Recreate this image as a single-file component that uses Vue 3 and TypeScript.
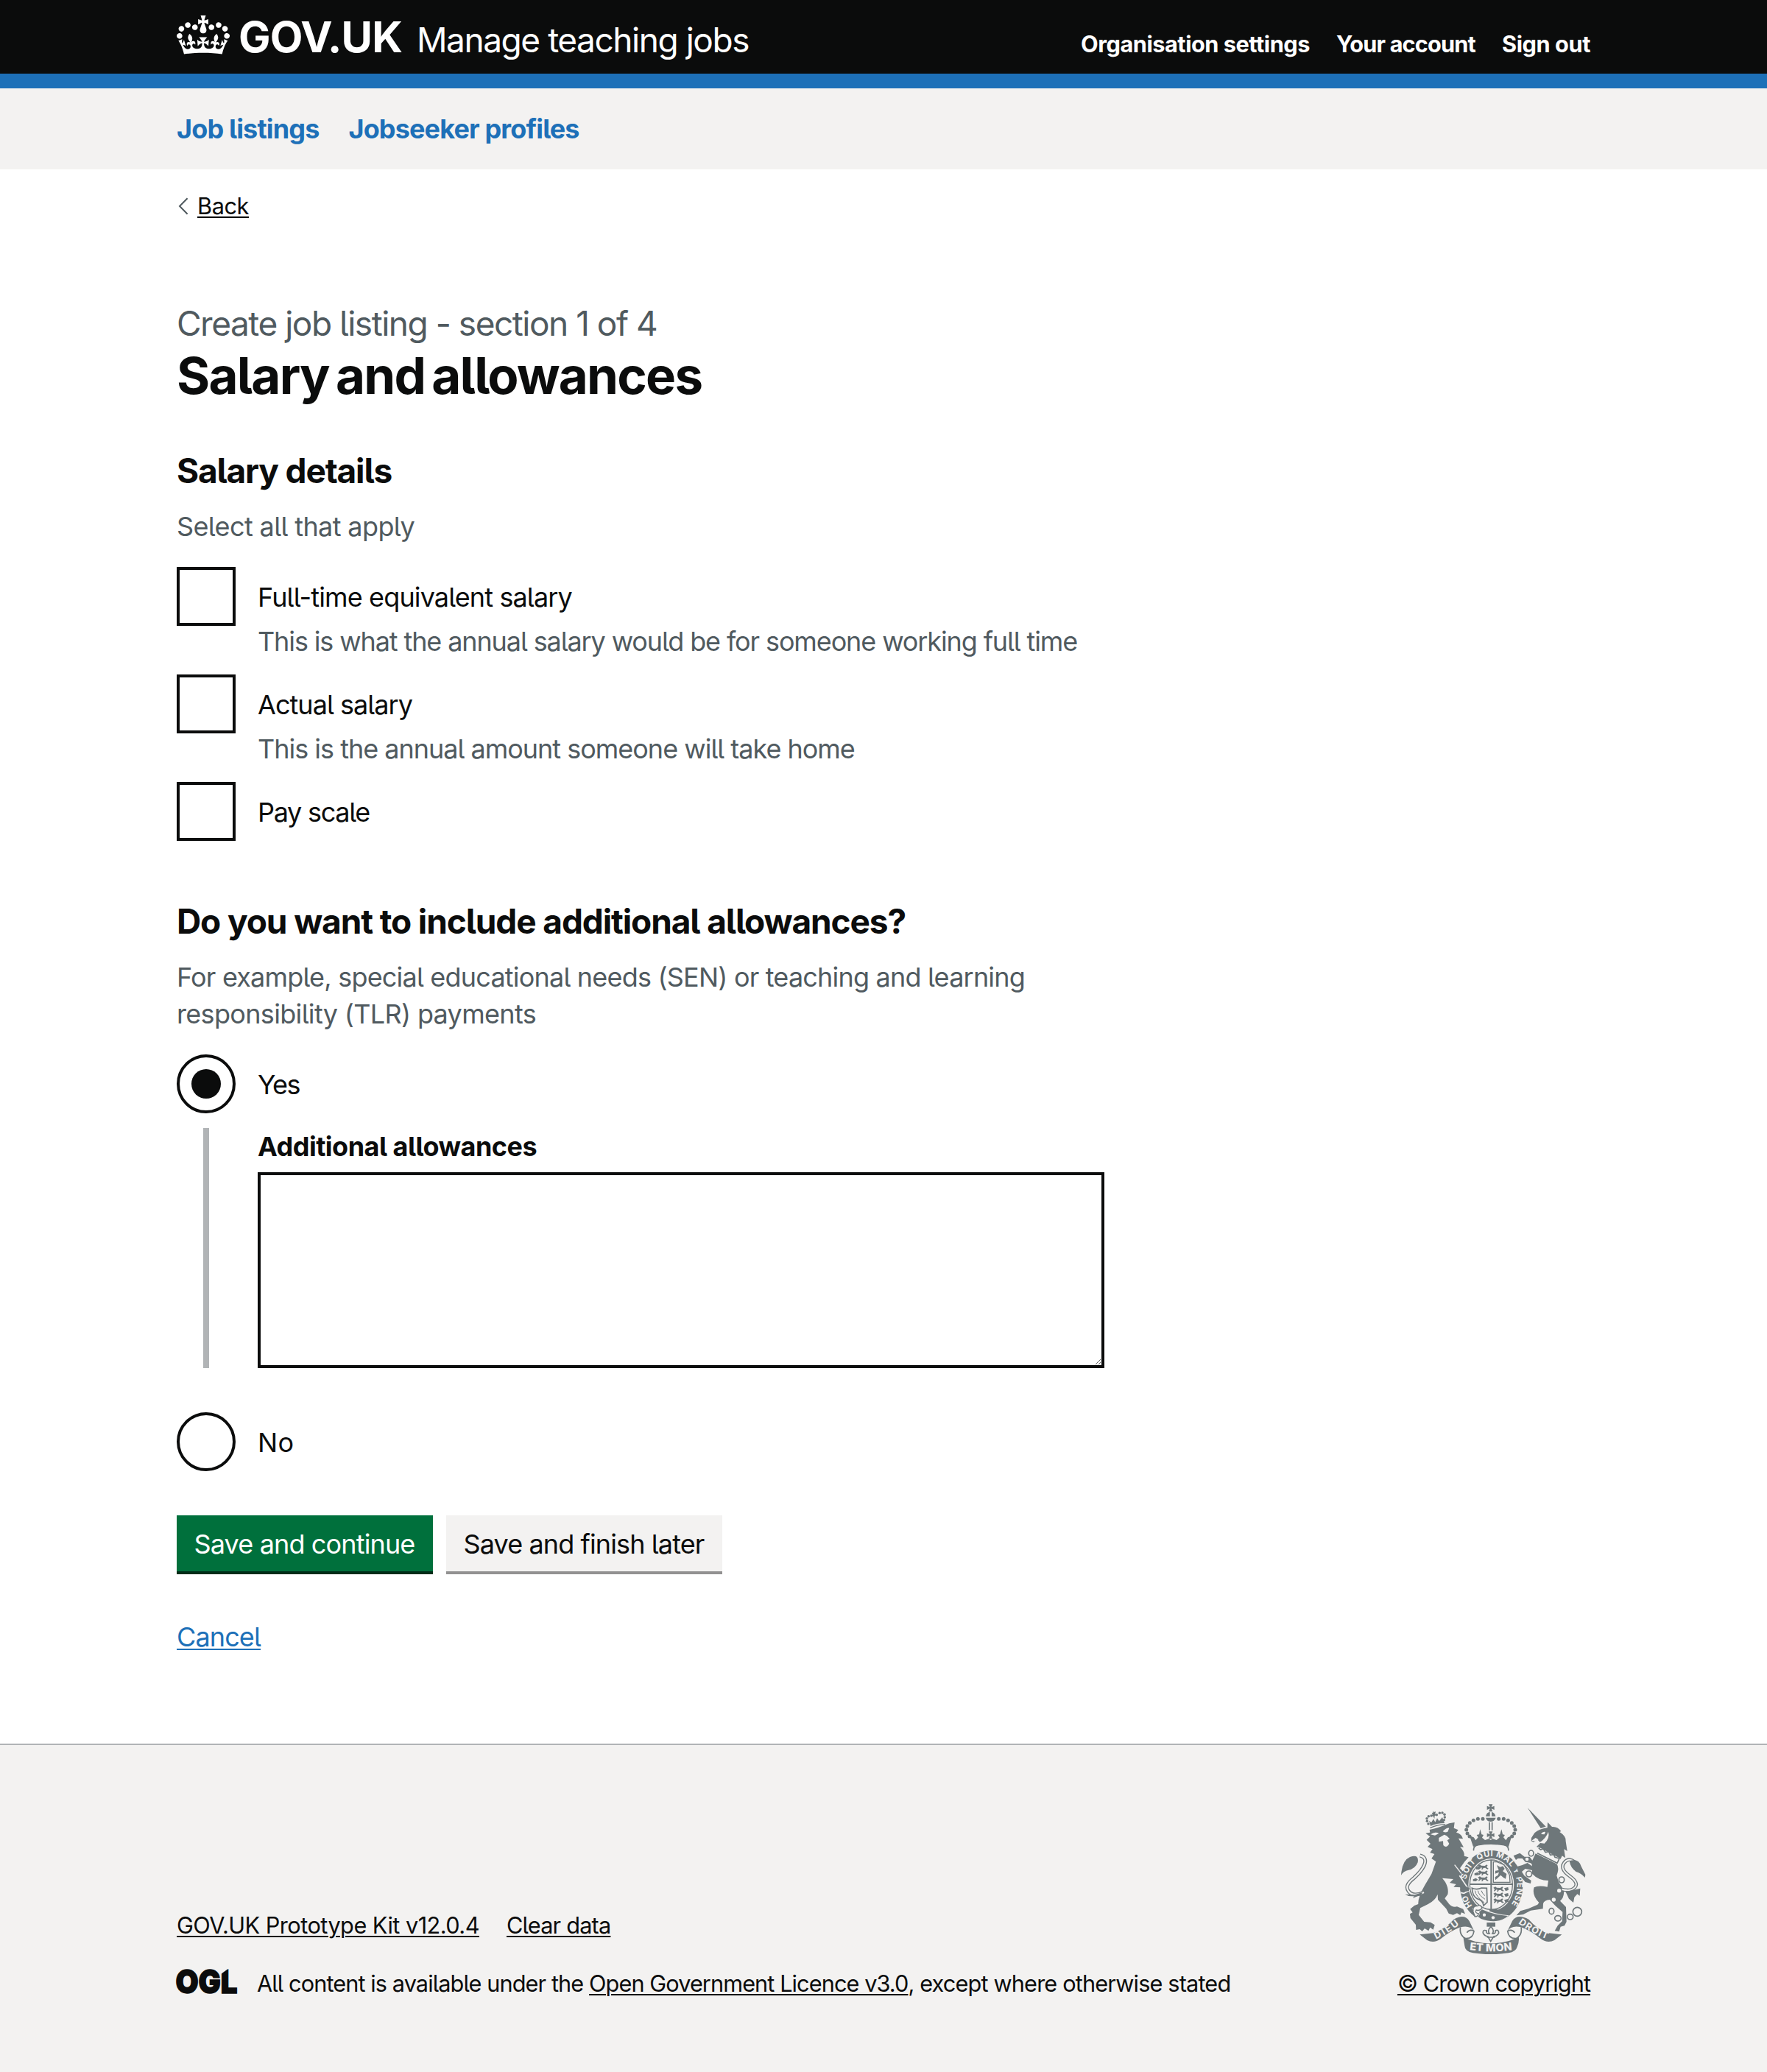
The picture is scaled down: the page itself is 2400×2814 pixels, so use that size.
<script setup lang="ts">
import { ref } from 'vue'

interface SalaryOption {
  id: string
  label: string
  hint?: string
}

const accountLinks = [
  { id: 'organisation', text: 'Organisation settings' },
  { id: 'account', text: 'Your account' },
  { id: 'signout', text: 'Sign out' },
]

const salaryOptions: SalaryOption[] = [
  {
    id: 'full-time',
    label: 'Full-time equivalent salary',
    hint: 'This is what the annual salary would be for someone working full time',
  },
  { id: 'actual', label: 'Actual salary', hint: 'This is the annual amount someone will take home' },
  { id: 'scale', label: 'Pay scale' },
]

const selected = ref<string[]>([])
const allowances = ref<'yes' | 'no'>('yes')
const allowanceText = ref('')

// Beads on the left arch of the royal crown; the right arch mirrors them.
const beads = [
  [405, 121], [385, 121], [367, 127], [352, 137], [342, 150], [338, 165], [342, 180], [351, 192],
]
// Beads of the small crown on the lion's head.
const lionBeads = [
  [183, 141], [178, 130], [177, 119], [184, 110], [195, 108], [217, 104], [229, 97], [240, 96], [249, 103], [250, 114], [247, 125],
]
// Rings of the chain worn by the unicorn.
const chain = [
  [602, 261, 10, 12], [593, 345, 12, 12], [726, 369, 11, 12], [685, 497, 10, 12], [711, 526, 13, 11], [761, 520, 12, 11], [790, 499, 18, 18],
]
const lionRows = [0, 24, 48]
</script>

<template>
  <div class="page">
    <header class="header">
      <div class="container header-row">
        <svg class="crown" viewBox="0 0 132 97" aria-hidden="true">
          <path fill="currentColor" fill-rule="evenodd" d="M25 30.2c3.5 1.5 7.7-.2 9.1-3.7 1.5-3.6-.2-7.8-3.9-9.2-3.6-1.4-7.6.3-9.1 3.9-1.4 3.5.3 7.5 3.9 9zM9 39.5c3.6 1.5 7.8-.2 9.2-3.7 1.5-3.6-.2-7.8-3.9-9.1-3.6-1.5-7.6.2-9.1 3.8-1.4 3.5.3 7.5 3.8 9zM4.4 57.2c3.5 1.5 7.7-.2 9.1-3.8 1.5-3.6-.2-7.7-3.9-9.1-3.5-1.5-7.6.3-9.1 3.8-1.4 3.5.3 7.6 3.9 9.1zm38.3-21.4c3.5 1.5 7.7-.2 9.1-3.8 1.5-3.6-.2-7.7-3.9-9.1-3.6-1.5-7.6.3-9.1 3.8-1.3 3.6.4 7.7 3.9 9.1zm64.4-5.6c-3.6 1.5-7.8-.2-9.1-3.7-1.5-3.6.2-7.8 3.8-9.2 3.6-1.4 7.7.3 9.2 3.9 1.3 3.5-.4 7.5-3.9 9zm15.9 9.3c-3.6 1.5-7.7-.2-9.1-3.7-1.5-3.6.2-7.8 3.7-9.1 3.6-1.5 7.7.2 9.2 3.8 1.5 3.5-.3 7.5-3.8 9zm4.7 17.7c-3.6 1.5-7.8-.2-9.2-3.8-1.5-3.6.2-7.7 3.9-9.1 3.6-1.5 7.7.3 9.2 3.8 1.3 3.5-.4 7.6-3.9 9.1zM89.3 35.8c-3.6 1.5-7.8-.2-9.2-3.8-1.4-3.6.2-7.7 3.9-9.1 3.6-1.5 7.7.3 9.2 3.8 1.4 3.6-.3 7.7-3.9 9.1zM69.7 17.7l8.9 4.7V9.3l-8.9 2.8c-.2-.3-.5-.6-.9-.9L72.4 0H59.6l3.5 11.2c-.3.3-.6.5-.9.9l-8.8-2.8v13.1l8.8-4.7c.3.3.6.7.9.9l-5 15.4v.1c-.2.8-.4 1.6-.4 2.4 0 4.1 3.1 7.5 7 8.1h.2c.3 0 .7.1 1 .1.4 0 .7 0 1-.1h.2c4-.6 7.1-4.1 7.1-8.1 0-.8-.1-1.7-.4-2.4V34l-5.1-15.4c.4-.2.7-.6 1-.9zM66 92.8c16.9 0 32.8 1.1 47.1 3.2 4-16.9 8.9-26.7 14-33.5l-9.6-3.4c1 4.9 1.1 7.2 0 10.2-1.5-1.4-3-4.3-4.2-8.7L108.6 76c2.8-2 5-3.2 7.5-3.3-4.4 9.4-10 11.9-13.6 11.2-4.3-.8-6.3-4.6-5.6-7.9 1-4.7 5.7-5.9 8-.5 4.3-8.7-3-11.4-7.6-8.8 7.1-7.2 7.9-13.5 2.1-21.1-8 6.1-8.1 12.3-4.5 20.8-4.7-5.4-12.1-2.5-9.5 6.2 3.4-5.2 7.9-2 7.2 3.1-.6 4.3-6.4 7.8-13.5 7.2-10.3-.9-10.9-8-11.2-13.8 2.5-.5 7.1 1.8 11 7.3L80.2 60c-4.1 4.4-8 5.3-12.3 5.4 1.4-4.4 8-11.6 8-11.6H55.5s6.4 7.2 7.9 11.6c-4.2-.1-8-1-12.3-5.4l1.4 16.4c3.9-5.5 8.5-7.7 10.9-7.3-.3 5.8-.9 12.8-11.1 13.8-7.2.6-12.9-2.9-13.5-7.2-.7-5 3.8-8.3 7.1-3.1 2.7-8.7-4.6-11.6-9.4-6.2 3.7-8.5 3.6-14.7-4.6-20.8-5.8 7.6-5 13.9 2.2 21.1-4.7-2.6-11.9.1-7.7 8.8 2.3-5.5 7.1-4.2 8.1.5.7 3.3-1.3 7.1-5.7 7.9-3.5.7-9-1.8-13.5-11.2 2.5.1 4.7 1.3 7.5 3.3l-4.7-15.4c-1.2 4.4-2.7 7.2-4.3 8.7-1.1-3-.9-5.3 0-10.2l-9.5 3.4c5 6.9 9.9 16.7 14 33.5 14.8-2.1 30.8-3.2 47.7-3.2z" />
        </svg>
        <span class="logotype">GOV.UK</span>
        <span class="product">Manage teaching jobs</span>
        <nav class="account-nav">
          <a v-for="link in accountLinks" :key="link.id" :class="link.id">{{ link.text }}</a>
        </nav>
      </div>
    </header>

    <nav class="primary-nav">
      <div class="container primary-row">
        <a>Job listings</a>
        <a>Jobseeker profiles</a>
      </div>
    </nav>

    <div class="container back-row">
      <svg class="chevron" viewBox="0 0 14 24" aria-hidden="true">
        <path d="M12.6 1.2 2 12l10.6 10.8" fill="none" stroke="#505a5f" stroke-width="2" />
      </svg>
      <a class="link back">Back</a>
    </div>

    <main class="container main">
      <div class="caption">Create job listing - section 1 of 4</div>
      <h1>Salary and allowances</h1>

      <form @submit.prevent>
        <section>
          <h2 class="details">Salary details</h2>
          <p class="hint select-hint">Select all that apply</p>
          <div class="options">
            <label v-for="option in salaryOptions" :key="option.id" class="option" :class="option.id">
              <input v-model="selected" class="box" type="checkbox" :value="option.id" />
              <span class="option-text">
                <span class="label">{{ option.label }}</span>
                <span v-if="option.hint" class="hint item-hint">{{ option.hint }}</span>
              </span>
            </label>
          </div>
        </section>

        <section class="allowances">
          <h2 class="question">Do you want to include additional allowances?</h2>
          <p class="hint example">
            <span>For example, special educational needs (SEN) or teaching and learning</span><br />
            <span class="second">responsibility (TLR) payments</span>
          </p>
          <label class="option yes">
            <input v-model="allowances" class="box round" type="radio" value="yes" />
            <span class="option-text"><span class="label">Yes</span></span>
          </label>
          <div class="conditional">
            <label class="field-label" for="allowance-text">Additional allowances</label>
            <textarea id="allowance-text" v-model="allowanceText"></textarea>
          </div>
          <label class="option no">
            <input v-model="allowances" class="box round" type="radio" value="no" />
            <span class="option-text"><span class="label">No</span></span>
          </label>
        </section>

        <div class="buttons">
          <button class="primary">Save and continue</button>
          <button class="secondary">Save and finish later</button>
        </div>
        <a class="link cancel">Cancel</a>
      </form>
    </main>

    <footer class="footer">
      <div class="container footer-row">
        <div class="footer-meta">
          <div class="footer-links">
            <a class="link kit">GOV.UK Prototype Kit v12.0.4</a>
            <a class="link clear">Clear data</a>
          </div>
          <div class="licence">
            <svg class="ogl" viewBox="0 0 82 40" aria-label="OGL">
              <text x="-1.5" y="33" textLength="84" lengthAdjust="spacingAndGlyphs">OGL</text>
              <path class="bg" d="M60 -1H71L60 7Z" />
            </svg>
            <div class="licence-text"><span class="l1">All content is available under the </span><a class="link l2">Open Government Licence v3.0</a><span class="l3">, except where otherwise stated</span></div>
          </div>
        </div>
        <div class="copyright">
          <svg class="arms" viewBox="57 60 783 612" aria-hidden="true">
            <defs>
              <path id="garter" d="M362 474 A105 120 0 1 1 502 490" />
              <path id="dieu" d="M215 611 Q262 590 318 545" />
              <path id="droit" d="M549 546 Q600 585 672 613" />
              <path id="etmon" d="M351 655 Q438 666 526 655" />
              <g id="cross">
                <path d="M-8 -15H8L3 -3 15 -8V8L3 3 8 15H-8L-3 3-15 8V-8L-3 -3Z" />
              </g>
              <g id="passant">
                <path d="M0 4l8-4 6 4 14 1 8-5 4 4-4 3 1 5 6 4-3 3-7-3-2-3-9 1-2 5-6 1 3-7-5-1-4 5-6 2 1-5 3-3-3-3z" />
              </g>
            </defs>
            <g class="grey">
              <!-- lion -->
              <circle v-for="(bead, i) in lionBeads" :key="i" :cx="bead[0]" :cy="bead[1]" r="5.2" />
              <path d="M192 150 186 128 195 136 204 121 211 134 219 118 227 130 240 114 249 138Q217 138 192 150ZM202 88l4 5 7-2-2 9 4 6-6 2-1 12-5-10-6-1 3-7-3-6 6-1z" />
              <path d="M190 158Q218 144 252 143" fill="none" class="outline" stroke-width="4" />
              <path d="M172 179 190 176 188 165Q225 158 268 139L290 135 287 158 305 166 297 176Q320 182 324 202L306 200 327 236 312 235Q332 255 329 272L347 277 330 296 312 322 331 342 350 376 350 412 338 405 330 418 312 412 318 400 286 398 296 387 270 381 285 366 240 362 252 378Q267 405 262 428L250 445 268 468Q280 482 300 478L325 488 333 508 318 502 313 513 300 505 284 512 266 506 256 487 222 450 221 428Q212 452 182 468L150 484 144 512 166 540 192 542 209 553 203 572 190 563 184 577 168 567 158 579 148 570 133 573 132 552 110 525 108 508 119 502 109 488 126 474 142 468Q140 440 168 392L196 345 214 295 196 282 208 264 190 258 200 244 180 235 192 222 176 206 190 193Z" />
              <path d="M165 420Q122 440 103 416T124 362Q163 326 169 301T149 270" fill="none" class="outline" stroke-width="15" />
            </g>
            <path d="M165 420Q122 440 103 416T124 362Q163 326 169 301T149 270" class="cut" stroke-width="7" />
            <path class="grey" d="M72 350Q76 290 108 276 146 262 140 298 130 325 100 330 82 334 72 350ZM88 428Q108 428 128 430L158 420 158 427 120 444 126 435Q105 439 88 428Z" />
            <path d="M192 184Q210 171 226 180L210 188ZM242 172Q256 156 268 158L262 173Q250 178 242 172ZM226 198 248 185 258 190 270 202 260 208 268 222Q257 242 244 228L243 211 226 214Z" class="bg" />
            <path d="M290 308 318 344" class="cut" stroke-width="4" />

            <g class="grey">
              <!-- royal crown -->
              <use href="#cross" x="437" y="76" />
              <path d="M417 110Q420 94 434 92V110ZM441 92Q455 96 457 110H441ZM417 116H458Q452 132 437 132T417 116Z" />
              <path d="M432 134V167M443 134V167" class="outline" stroke-width="5" />
              <g v-for="(bead, i) in beads" :key="i">
                <circle :cx="bead[0]" :cy="bead[1]" r="7.5" />
                <circle :cx="875 - bead[0]" :cy="bead[1]" r="7.5" />
              </g>
              <use href="#cross" x="437" y="187" />
              <path d="M351 190 368 196 376 208 386 196 380 186 390 184 394 163 400 184 408 186 402 197 414 207 430 202 437 207 445 202 461 207 473 197 467 186 475 184 481 163 486 184 495 186 489 196 499 208 507 196 523 190 510 234Q438 210 366 234Z" />
              <path d="M368 250Q365 232 385 227 438 218 492 227 512 232 509 250" fill="none" class="outline" stroke-width="5" />
              <!-- garter -->
              <ellipse cx="440" cy="395" rx="128" ry="146" />
            </g>
            <path d="M371 252Q370 237 390 233 438 225 487 233 506 238 507 251L490 257Q440 234 386 257Z" class="bg" />
            <ellipse cx="439" cy="389" rx="93" ry="107" class="bg" />
            <text class="motto"><textPath href="#garter" textLength="48">HO</textPath><textPath href="#garter" startOffset="112" textLength="408">SOIT QUI MAL Y PENSE</textPath></text>
            <g class="grey">
              <ellipse cx="439" cy="389" rx="87" ry="101" fill="none" class="outline" stroke-width="4" />
              <path d="M439 288V490M352 387H526" class="outline" stroke-width="6" />
              <g v-for="dy in lionRows" :key="dy">
                <use href="#passant" :x="385" :y="307 + dy" />
                <use href="#passant" :x="448" :y="397 + dy" />
                <path :d="`M${365 + (48 - dy) / 4} ${319 + dy}l12-5 8 6-8 7-12-1zM${492} ${403 + dy}l16-4 2 11-12 5z`" />
              </g>
              <path d="M448 296H463L492 308 514 350 516 379H448Z" fill="none" class="outline" stroke-width="4" />
              <path d="M462 309 476 317 487 313 494 324 486 334 502 345 498 365 488 359 478 350 468 359 456 370 455 358 467 350 471 338 455 344 456 332 470 330Z" />
              <path d="M361 403Q382 411 400 402L421 403 423 460 408 474Q406 452 382 446 362 435 361 403Z" fill="none" class="outline" stroke-width="5" />
              <path d="M373 413Q376 436 411 462M385 413Q388 432 414 448M399 413Q403 426 414 434" fill="none" class="outline" stroke-width="3" />
              <path d="M429 488H466L458 500H436Z" />
            </g>
            <path d="M310 352 350 412 328 424 314 421" class="cut" stroke-width="5" />
            <path d="M362 485 387 470 405 484Q445 508 512 514L485 536Q420 556 378 524Z" class="bg" />
            <g class="grey">
              <path d="M402 490Q446 512 507 516 468 552 398 528L385 519Q396 510 390 500Z" />
              <path d="M366 497Q362 475 382 476 394 466 402 484 392 497 378 492 371 504 388 507 384 522 370 518 371 508Z" fill="none" class="outline" stroke-width="4" />
              <path d="M330 418 314 410 322 402 330 406 335 396 350 402 348 414Z" />
            </g>
            <circle cx="411" cy="512" r="6.5" class="bg" />
            <circle cx="447" cy="523" r="6.5" class="bg" />

            <g class="grey">
              <!-- unicorn -->
              <path d="M587 75 662 152 641 159Z" />
              <path d="M669 134 687 153Q710 151 724 171L718 174Q746 192 743 212L749 252 736 244 741 280 728 271 722 284 624 234 640 218 627 204 612 216 602 211 603 198 616 178Q634 162 668 157Z" />
              <path d="M620 262 706 304Q718 320 706 352L714 378 735 410Q738 440 720 455L744 480 746 540 738 556 722 560 716 580 698 577 710 556 728 538 730 500 700 474 678 450Q654 452 651 466L650 487 600 494 570 510 542 514 558 496 590 487 628 470 634 462Q604 430 614 400 632 390 668 398L672 372Q632 372 606 344L605 305 590 293 600 284 606 292Z" />
              <path d="M530 271 556 260 575 275 596 275 608 292 600 300 578 296 566 282 548 282 540 288ZM542 316 566 309 587 300 612 318 606 330 578 324 564 336 574 352 602 372 600 384 578 378 561 358 548 332Z" />
              <path d="M728 408Q762 418 780 400T758 353 736 300 779 296" fill="none" class="outline" stroke-width="14" />
            </g>
            <path d="M728 408Q762 418 780 400T758 353 736 300 779 296" class="cut" stroke-width="6" />
            <path class="grey" d="M758 292Q795 280 806 314L823 348 821 360Q806 342 785 336 762 320 758 292ZM742 416Q776 412 802 404L800 434 790 427 778 440 774 462 756 446Z" />
            <path d="M642 183Q650 170 660 174L656 184ZM604 209 620 198 632 205 615 212ZM634 218Q662 202 672 173 679 199 656 221Z" class="bg" />
            <path d="M630 234 720 282 708 305 624 262Z" class="bg" />
            <path d="M632 238 640 246 652 243 660 257 674 254 680 268 694 266 699 277 717 282 708 301 627 260" fill="none" class="grey outline" stroke-width="5" />
            <g>
              <ellipse v-for="(ring, i) in chain" :key="i" :cx="ring[0]" :cy="ring[1]" :rx="ring[2]" :ry="ring[3]" class="ring" />
              <circle cx="716" cy="413" r="8" class="bg" />
              <circle cx="694" cy="450" r="8" class="bg" />
              <circle cx="585" cy="285" r="7" class="bg" />
            </g>

            <g class="grey">
              <!-- ribbon -->
              <path d="M148 592 202 586Q248 572 287 530 330 505 350 537L370 578Q352 552 314 562 272 578 234 609 206 630 178 615Z" />
              <path d="M727 592 673 586Q627 572 592 530 545 505 525 537L505 578Q523 552 561 562 603 578 641 609 669 630 697 615Z" />
              <path d="M325 601Q370 628 438 628T551 601Q555 618 545 642 540 662 510 667 438 678 365 667 332 660 331 638Z" />
              <path d="M314 562Q308 594 334 608 365 610 369 578 352 568 340 584M561 562Q567 594 541 608 510 610 506 578 523 568 535 584" fill="none" class="outline" stroke-width="5" />
              <path d="M421 543H456V560H421Z" />
              <path d="M438 560Q422 574 432 588 418 590 420 576 404 570 406 586 412 598 426 600 L437 620 449 600Q466 598 470 586 470 570 456 576 458 590 444 588 454 574 438 560ZM422 603H454" fill="none" class="outline" stroke-width="5" />
            </g>
            <g class="scroll">
              <text><textPath href="#dieu" textLength="112">DIEU</textPath></text>
              <text><textPath href="#droit" textLength="134">DROIT</textPath></text>
              <text class="large"><textPath href="#etmon" textLength="174">ET MON</textPath></text>
            </g>
          </svg>
          <a class="link crown-link">© Crown copyright</a>
        </div>
      </div>
    </footer>
  </div>
</template>

<style>
body {
  background: #f3f2f1;
}
</style>

<style scoped>
.page {
  background: #fff;
  color: #0b0c0c;
  font-family: Inter, "Liberation Sans", sans-serif;
  font-feature-settings: "cv05";
  font-size: 36px;
  line-height: 50px;
}
.container {
  width: 1920px;
  margin: 0 auto;
}
h1, h2, p { margin: 0; }

.header {
  height: 100px;
  background: #0b0c0c;
  border-bottom: 20px solid #1d70b8;
  color: #fff;
}
.header-row {
  display: flex;
  align-items: baseline;
  padding-top: 20px;
  white-space: nowrap;
}
.crown {
  align-self: flex-start;
  width: 72px;
  height: 53px;
  margin-top: 1px;
}
.logotype {
  margin-left: 12px;
  font-size: 58px;
  font-weight: 700;
  line-height: 60px;
  letter-spacing: -0.86px;
}
.product {
  margin-left: 20px;
  font-size: 46px;
  letter-spacing: -1.46px;
}
.account-nav {
  display: flex;
  gap: 36px;
  margin-left: auto;
  font-size: 30.7px;
  font-weight: 700;
  line-height: 40px;
}
.organisation { letter-spacing: -0.46px; }
.account { letter-spacing: -0.83px; }
.signout { letter-spacing: -0.42px; }

.primary-nav {
  background: #f3f2f1;
  color: #1d70b8;
  font-weight: 700;
}
.primary-row {
  display: flex;
  align-items: center;
  gap: 40px;
  height: 110px;
  letter-spacing: -0.85px;
}

.back-row {
  display: flex;
  align-items: center;
  gap: 12px;
  padding-top: 30px;
  line-height: 40px;
}
.chevron {
  width: 14px;
  height: 24px;
  margin-left: 2px;
}
.link {
  text-decoration: underline;
  text-decoration-thickness: 2px;
  text-underline-offset: 3px;
  white-space: nowrap;
}
.back { font-size: 30.7px; letter-spacing: -0.42px; }

.main { padding: 109px 0 120px; }
.caption {
  color: #505a5f;
  font-size: 46px;
  line-height: 60px;
  letter-spacing: -1.49px;
}
h1 {
  margin-top: 1px;
  font-size: 69px;
  line-height: 80px;
  letter-spacing: -1.75px;
  word-spacing: -5.5px;
}
h2 {
  font-size: 46px;
  line-height: 60px;
}
.details { margin-top: 59px; letter-spacing: -1.17px; }
.hint { color: #505a5f; }
.select-hint { margin: 21px 0 30px; letter-spacing: -0.62px; }
.options {
  display: flex;
  flex-direction: column;
  gap: 20px;
}
.option {
  display: flex;
  gap: 30px;
}
.box {
  appearance: none;
  flex: none;
  box-sizing: border-box;
  width: 80px;
  height: 80px;
  margin: 0;
  border: 4px solid #0b0c0c;
  background: #fff;
}
.round {
  display: grid;
  place-items: center;
  border-radius: 50%;
}
.round:checked::before {
  content: "";
  width: 40px;
  height: 40px;
  border-radius: 50%;
  background: #0b0c0c;
}
.option-text {
  display: flex;
  flex-direction: column;
  gap: 10px;
  padding-top: 16px;
  white-space: nowrap;
}
.full-time .label { letter-spacing: -0.87px; }
.actual .label { letter-spacing: -0.96px; }
.scale .label { letter-spacing: -1.28px; }
.full-time .hint { letter-spacing: -1.12px; }
.actual .hint { letter-spacing: -1.01px; }

.allowances { margin-top: 79px; }
.question { letter-spacing: -1.11px; }
.example { margin: 21px 0 30px; letter-spacing: -0.8px; white-space: nowrap; }
.example .second { letter-spacing: -0.67px; }
.yes { letter-spacing: -1.56px; }
.no { letter-spacing: 0.3px; }
.conditional {
  display: flex;
  flex-direction: column;
  gap: 10px;
  width: 1150px;
  margin: 20px 0 60px 36px;
  padding-left: 66px;
  border-left: 8px solid #b1b4b6;
}
.field-label { font-weight: 700; letter-spacing: -0.51px; }
textarea {
  display: block;
  box-sizing: border-box;
  width: 1150px;
  height: 266px;
  padding: 10px;
  border: 4px solid #0b0c0c;
  border-radius: 0;
  background: #fff;
  font: inherit;
  resize: vertical;
}

.buttons {
  display: flex;
  gap: 18px;
  margin-top: 60px;
}
button {
  height: 76px;
  padding: 2px 24px 0 23px;
  border: 0;
  border-radius: 0;
  font: inherit;
  font-feature-settings: "cv05";
  white-space: nowrap;
}
.primary {
  width: 348px;
  background: #00703c;
  box-shadow: 0 4px 0 #002d18;
  color: #fff;
  letter-spacing: -0.86px;
}
.secondary {
  width: 375px;
  background: #f3f2f1;
  box-shadow: 0 4px 0 #929191;
  color: #0b0c0c;
  letter-spacing: -0.89px;
}
.cancel {
  display: block;
  width: max-content;
  margin-top: 64px;
  color: #1d70b8;
  letter-spacing: -0.88px;
}

.footer {
  border-top: 2px solid #b1b4b6;
  background: #f3f2f1;
  padding: 80px 0 100px;
  font-size: 30.7px;
  line-height: 40px;
}
.footer-row {
  display: flex;
  align-items: flex-end;
  justify-content: space-between;
}
.footer-meta {
  display: flex;
  flex-direction: column;
  gap: 39px;
}
.footer-links { display: flex; gap: 37px; }
.kit { letter-spacing: -0.53px; }
.clear { letter-spacing: -0.8px; }
.licence { display: flex; gap: 27px; }
.ogl {
  width: 82px;
  height: 40px;
  overflow: visible;
}
.ogl text {
  font-size: 44px;
  font-weight: 900;
  stroke: #0b0c0c;
  stroke-width: 1.5px;
  fill: #0b0c0c;
}
.licence-text { white-space: pre; }
.l1 { letter-spacing: -0.91px; }
.l2 { letter-spacing: -0.92px; }
.l3 { letter-spacing: -0.84px; }
.copyright {
  display: flex;
  flex-direction: column;
  align-items: center;
  gap: 20px;
}
.arms { width: 261px; height: 204px; }
.crown-link { letter-spacing: -0.92px; }

.grey { fill: #6e777a; }
.outline { stroke: #6e777a; }
.grey .outline[fill="none"], .grey.outline[fill="none"] { fill: none; }
.bg { fill: #f3f2f1; }
.cut { fill: none; stroke: #f3f2f1; }
.ring { fill: none; stroke: #6e777a; stroke-width: 5; }
.motto { fill: #f3f2f1; font-size: 33px; font-weight: 700; }
.scroll { fill: #f3f2f1; font-size: 38px; font-weight: 700; }
.scroll .large { font-size: 43px; font-weight: 800; }
</style>
